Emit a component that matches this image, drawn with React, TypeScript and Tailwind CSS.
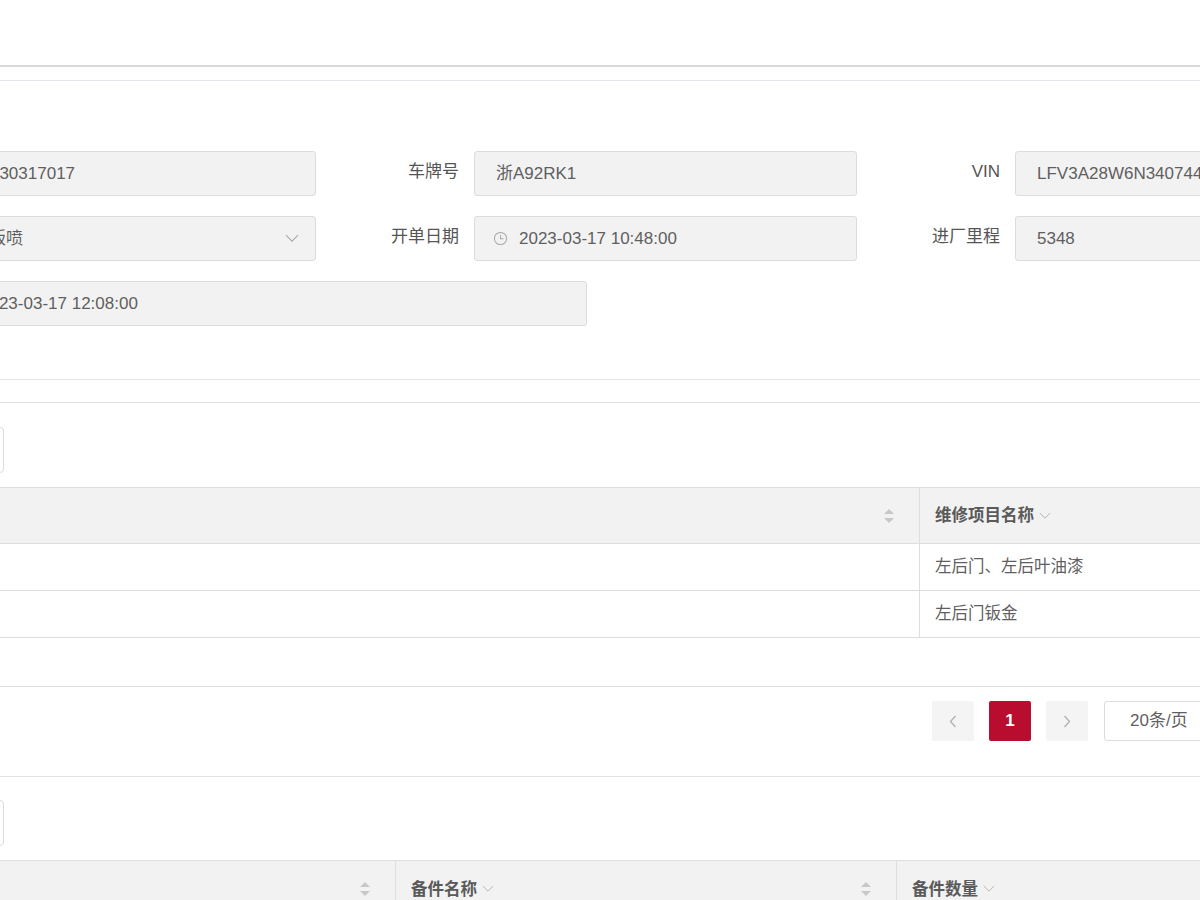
import React from "react";

const font = "[font-family:'Liberation_Sans','Noto_Sans_CJK_SC',sans-serif]";

function Clock() {
  return (
    <svg width="15" height="15" viewBox="0 0 16 16" fill="none" stroke="#a8a8a8" strokeWidth="1.1" className="shrink-0">
      <circle cx="8" cy="8" r="6.5" />
      <path d="M8 4.2V8.3h3.2" />
    </svg>
  );
}

function Chevron({ size = 14, color = "#a8a8a8" }: { size?: number; color?: string }) {
  return (
    <svg width={size} height={size * 0.6} viewBox="0 0 14 8" fill="none" stroke={color} strokeWidth="1.1">
      <path d="M1 1l6 6 6-6" />
    </svg>
  );
}

function Sort() {
  return (
    <svg width="12" height="20" viewBox="0 0 12 20" className="shrink-0">
      <path d="M6 3l5 5H1z" fill="#c8c8c8" />
      <path d="M6 17l5-5H1z" fill="#c8c8c8" />
    </svg>
  );
}

function Field({ label, children, icon, chevron }: { label: string; children: React.ReactNode; icon?: boolean; chevron?: boolean }) {
  return (
    <div className="flex items-center w-[541px]">
      <div className="w-[143px] text-right text-[17px] text-[#555] -mt-[4px] whitespace-nowrap">{label}</div>
      <div className="ml-[15px] w-[383px] h-[45px] rounded-[3px] border border-[#dcdcdc] bg-[#f2f2f2] pl-[21px] pr-[16px] flex items-center text-[17px] text-[#5f5f5f] whitespace-nowrap overflow-hidden">
        {icon && <span className="mr-[11px] -ml-[3px] flex"><Clock /></span>}
        <span className="flex-1">{children}</span>
        {chevron && <Chevron />}
      </div>
    </div>
  );
}

function HeadCell({ w, label, sort, border }: { w: string; label?: string; sort?: boolean; border?: boolean }) {
  return (
    <div className={`${w} shrink-0 h-full flex items-center pl-[15px] pr-[24px] ${border ? "border-l border-[#dedede]" : ""}`}>
      {label && (
        <span className="flex items-center gap-[5px] font-bold text-[16.5px] text-[#5a5a5a]">
          {label}
          <Chevron size={12} color="#b0b0b0" />
        </span>
      )}
      <span className="flex-1" />
      {sort && <Sort />}
    </div>
  );
}

function Button() {
  return <div className="ml-[140px] w-[104px] h-[46px] rounded-[4px] border border-[#dcdcdc] bg-white" />;
}

const rows = ["左后门、左后叶油漆", "左后门钣金"];

export default function App() {
  return (
    <div className={`w-[1200px] h-[900px] overflow-hidden bg-white ${font}`}>
      <div className="h-[65px]" />
      <div className="h-[2px] bg-[#d9d9d9]" />
      <div className="h-[13px]" />
      <div className="-ml-[240px] w-[1700px]">
        <section className="border-y border-[#e4e4ea] pt-[70px] pb-[53px]">
          <div className="pl-[15px] flex flex-col gap-[20px]">
            <div className="flex">
              <Field label="工单号">W20230317017</Field>
              <Field label="车牌号">浙A92RK1</Field>
              <Field label="VIN">LFV3A28W6N3407441</Field>
            </div>
            <div className="flex">
              <Field label="维修类型" chevron>事故钣喷</Field>
              <Field label="开单日期" icon>2023-03-17 10:48:00</Field>
              <Field label="进厂里程">5348</Field>
            </div>
            <div className="flex items-center">
              <div className="w-[143px] text-right text-[17px] text-[#555] -mt-[4px]">预计交车</div>
              <div className="ml-[15px] w-[654px] h-[45px] rounded-[3px] border border-[#dcdcdc] bg-[#f2f2f2] pl-[20px] flex items-center text-[17px] text-[#5f5f5f] whitespace-nowrap">
                <span className="mr-[11px] flex"><Clock /></span>
                2023-03-17 12:08:00
              </div>
            </div>
          </div>
        </section>

        <section className="mt-[22px] border-t border-[#e2e2e2] pt-[24px]">
          <Button />
          <div className="mt-[14px]">
            <div className="h-[57px] flex bg-[#f2f2f2] border-y border-[#dedede]">
              <HeadCell w="w-[1159px]" sort />
              <HeadCell w="w-[541px]" label="维修项目名称" border />
            </div>
            {rows.map((r) => (
              <div key={r} className="h-[47px] flex border-b border-[#dedede] text-[16.5px] text-[#5f5f5f]">
                <div className="w-[1159px] shrink-0" />
                <div className="flex-1 border-l border-[#dedede] pl-[15px] flex items-center -mt-[1px]">{r}</div>
              </div>
            ))}
            <div className="h-[49px] border-b border-[#dedede]" />
          </div>
          <div className="pt-[14px] pb-[35px] pl-[1172px] flex items-center gap-[15px]">
            <div className="w-[42px] h-[40px] rounded-[2px] bg-[#f4f4f5] flex items-center justify-center">
              <svg width="8" height="13" viewBox="0 0 8 13" fill="none" stroke="#b0b0b0" strokeWidth="1.3"><path d="M6.5 1L1.5 6.5l5 5.5" /></svg>
            </div>
            <div className="w-[42px] h-[40px] rounded-[2px] bg-[#b80d2f] flex items-center justify-center text-white font-bold text-[17px]">1</div>
            <div className="w-[42px] h-[40px] rounded-[2px] bg-[#f4f4f5] flex items-center justify-center">
              <svg width="8" height="13" viewBox="0 0 8 13" fill="none" stroke="#b0b0b0" strokeWidth="1.3"><path d="M1.5 1l5 5.5-5 5.5" /></svg>
            </div>
            <div className="ml-[1px] w-[130px] h-[40px] rounded-[3px] border border-[#dcdcdc] bg-white flex items-center pl-[25px] text-[17px] text-[#5f5f5f]">20条/页</div>
          </div>
        </section>

        <section className="border-t border-[#e2e2e2] pt-[23px]">
          <Button />
          <div className="mt-[14px] h-[57px] flex bg-[#f2f2f2] border-t border-[#dedede]">
            <HeadCell w="w-[635px]" sort />
            <HeadCell w="w-[501px]" label="备件名称" sort border />
            <HeadCell w="w-[500px]" label="备件数量" border />
          </div>
        </section>
      </div>
    </div>
  );
}
